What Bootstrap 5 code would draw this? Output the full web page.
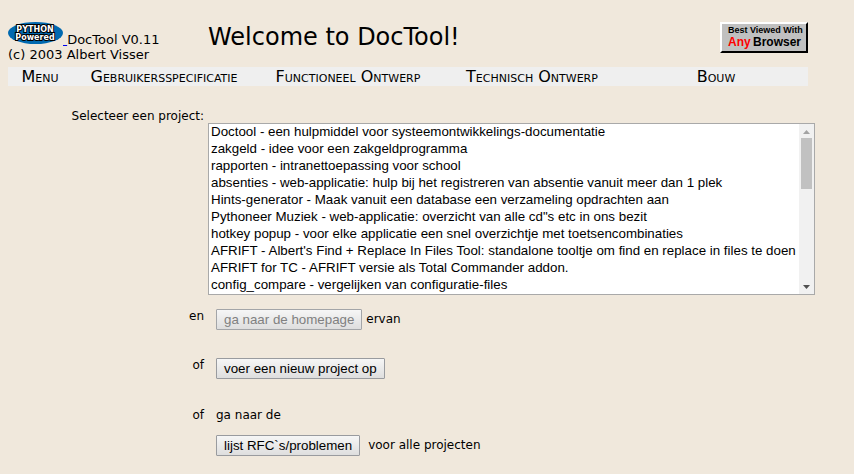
<!DOCTYPE html>
<html lang="nl">
<head>
<meta charset="utf-8">
<meta name="viewport" content="width=device-width, initial-scale=1">
<title>Welcome to DocTool!</title>
<link href="https://cdn.jsdelivr.net/npm/bootstrap@5.3.0/dist/css/bootstrap.min.css" rel="stylesheet">
<style>
body { background: #f0e8dc; color: #000; font-family: "DejaVu Sans", Verdana, sans-serif; font-size: 12px; line-height: 16px; }
.page { padding: 22px 8px 0; }
.page-top { margin-right: 38px; }
.brand { width: 200px; font-size: 13px; line-height: 15px; }
.brand a { color: #0000ee; }
.page-title { font-size: 24px; line-height: 30px; }
.main-menu { background: #efefef; font-size: 16px; line-height: 19px; font-variant: small-caps; margin-top: 5px; }
.main-menu a { color: #000; width: 23%; }
.main-menu a:first-child { width: 8%; }
.content { margin-top: 22px; }
.side { width: 196px; flex: none; text-align: right; }
.project-box { flex: 1; margin: 15px 31px 0 4px; background: #fff; border: 1px solid #a9a9a9; }
.project-list { flex: 1; min-width: 0; height: 170px; border: 0; padding: 0; outline: 0; color: #000; background: #fff; font-family: "Liberation Sans", Arial, sans-serif; font-size: revert; line-height: 17px; scrollbar-width: none; }
.project-list::-webkit-scrollbar { display: none; }
.project-list option { padding: 0 2px 1px; min-height: 17px; line-height: 16px; }
.scroll { width: 15px; background: #f1f1f1; flex: none; }
.scroll svg { display: block; }
.thumb { width: 11px; height: 51px; background: #c1c1c1; }
.actions { margin-left: 12px; }
.btn-classic { --bs-btn-padding-x: 8px; --bs-btn-padding-y: 1px; --bs-btn-border-radius: 1px; --bs-btn-color: #000; --bs-btn-border-color: #999b9f; --bs-btn-disabled-color: #808080; --bs-btn-disabled-border-color: #a3a5a8; --bs-btn-disabled-opacity: 1; font-family: "Liberation Sans", Arial, sans-serif; font-size: revert; line-height: 17px; background: linear-gradient(#f6f6f6, #dedede); padding: 1px 7px; }
.project-row { margin-bottom: 14px; }
.line { margin-bottom: 28px; }
.line .side { line-height: 14px; }
.intro { margin-bottom: 12px; }
</style>
</head>
<body>
<div class="page">
  <header class="page-top">
    <div class="d-flex align-items-start">
      <div class="brand">
        <div class="d-flex align-items-end">
          <a href="#" aria-label="Python Powered" class="d-flex align-items-end">
            <svg width="55" height="25" viewBox="0 0 55 25">
              <ellipse cx="27.500" cy="11" rx="27.500" ry="11" fill="#0069b0"/>
              <g font-family="DejaVu Sans" font-weight="bold" text-anchor="middle" fill="#fff" stroke="#000" stroke-width="2" paint-order="stroke">
                <text x="27" y="10" font-size="8">PYTHON</text>
                <text x="27" y="18" font-size="8">Powered</text>
              </g>
            </svg><span>&nbsp;</span></a><span>DocTool V0.11</span>
        </div>
        <div>(c) 2003 Albert Visser</div>
      </div>
      <h1 class="page-title fw-normal mb-0">Welcome to DocTool!</h1>
      <a href="#" class="ms-auto" aria-label="Best Viewed With Any Browser">
        <svg class="d-block" width="88" height="31" viewBox="0 0 88 31">
          <path fill="#000" d="M0 0h88v31H0z"/>
          <path fill="#fff" d="M0 0h88l-2 2H2v27l-2 2z"/>
          <path fill="#c0c0c0" d="M2 2h84v27H2z"/>
          <g font-weight="bold" font-family="Liberation Sans">
            <text x="8" y="11" font-size="9" fill="#000">Best Viewed With</text>
            <text x="8" y="24" font-size="12" fill="#f00">Any</text>
            <text x="33" y="24" font-size="12" fill="#000">Browser</text>
          </g>
        </svg>
      </a>
    </div>
    <nav class="main-menu d-flex text-center">
      <a href="#" class="text-decoration-none">Menu</a>
      <a href="#" class="text-decoration-none">Gebruikersspecificatie</a>
      <a href="#" class="text-decoration-none">Functioneel Ontwerp</a>
      <a href="#" class="text-decoration-none">Technisch Ontwerp</a>
      <a href="#" class="text-decoration-none">Bouw</a>
    </nav>
  </header>
  <main class="content">
    <div class="project-row d-flex">
      <label class="side" for="project">Selecteer een project:</label>
      <div class="project-box d-flex">
        <select class="project-list" id="project" size="10">
          <option>Doctool - een hulpmiddel voor systeemontwikkelings-documentatie</option>
          <option>zakgeld - idee voor een zakgeldprogramma</option>
          <option>rapporten - intranettoepassing voor school</option>
          <option>absenties - web-applicatie: hulp bij het registreren van absentie vanuit meer dan 1 plek</option>
          <option>Hints-generator - Maak vanuit een database een verzameling opdrachten aan</option>
          <option>Pythoneer Muziek - web-applicatie: overzicht van alle cd"s etc in ons bezit</option>
          <option>hotkey popup - voor elke applicatie een snel overzichtje met toetsencombinaties</option>
          <option>AFRIFT - Albert's Find + Replace In Files Tool: standalone tooltje om find en replace in files te doen</option>
          <option>AFRIFT for TC - AFRIFT versie als Total Commander addon.</option>
          <option>config_compare - vergelijken van configuratie-files</option>
        </select>
        <div class="scroll d-flex flex-column align-items-center" aria-hidden="true">
          <svg width="15" height="14" viewBox="0 0 15 14"><path d="M4 10h7L7.500 6z" fill="#a3a3a3"/></svg>
          <div class="thumb"></div>
          <svg class="mt-auto" width="15" height="14" viewBox="0 0 15 14"><path d="M4 5h7L7.500 9z" fill="#505050"/></svg>
        </div>
      </div>
    </div>
    <div class="line d-flex">
      <div class="side">en</div>
      <div class="actions"><button type="button" class="btn btn-classic" disabled>ga naar de homepage</button> ervan</div>
    </div>
    <div class="line d-flex">
      <div class="side">of</div>
      <div class="actions"><button type="button" class="btn btn-classic">voer een nieuw project op</button></div>
    </div>
    <div class="d-flex">
      <div class="side">of</div>
      <div class="actions">
        <div class="intro">ga naar de</div>
        <div><button type="button" class="btn btn-classic">lijst RFC`s/problemen</button><span class="ms-2">voor alle projecten</span></div>
      </div>
    </div>
  </main>
</div>
<script src="https://cdn.jsdelivr.net/npm/bootstrap@5.3.0/dist/js/bootstrap.bundle.min.js"></script>
</body>
</html>
